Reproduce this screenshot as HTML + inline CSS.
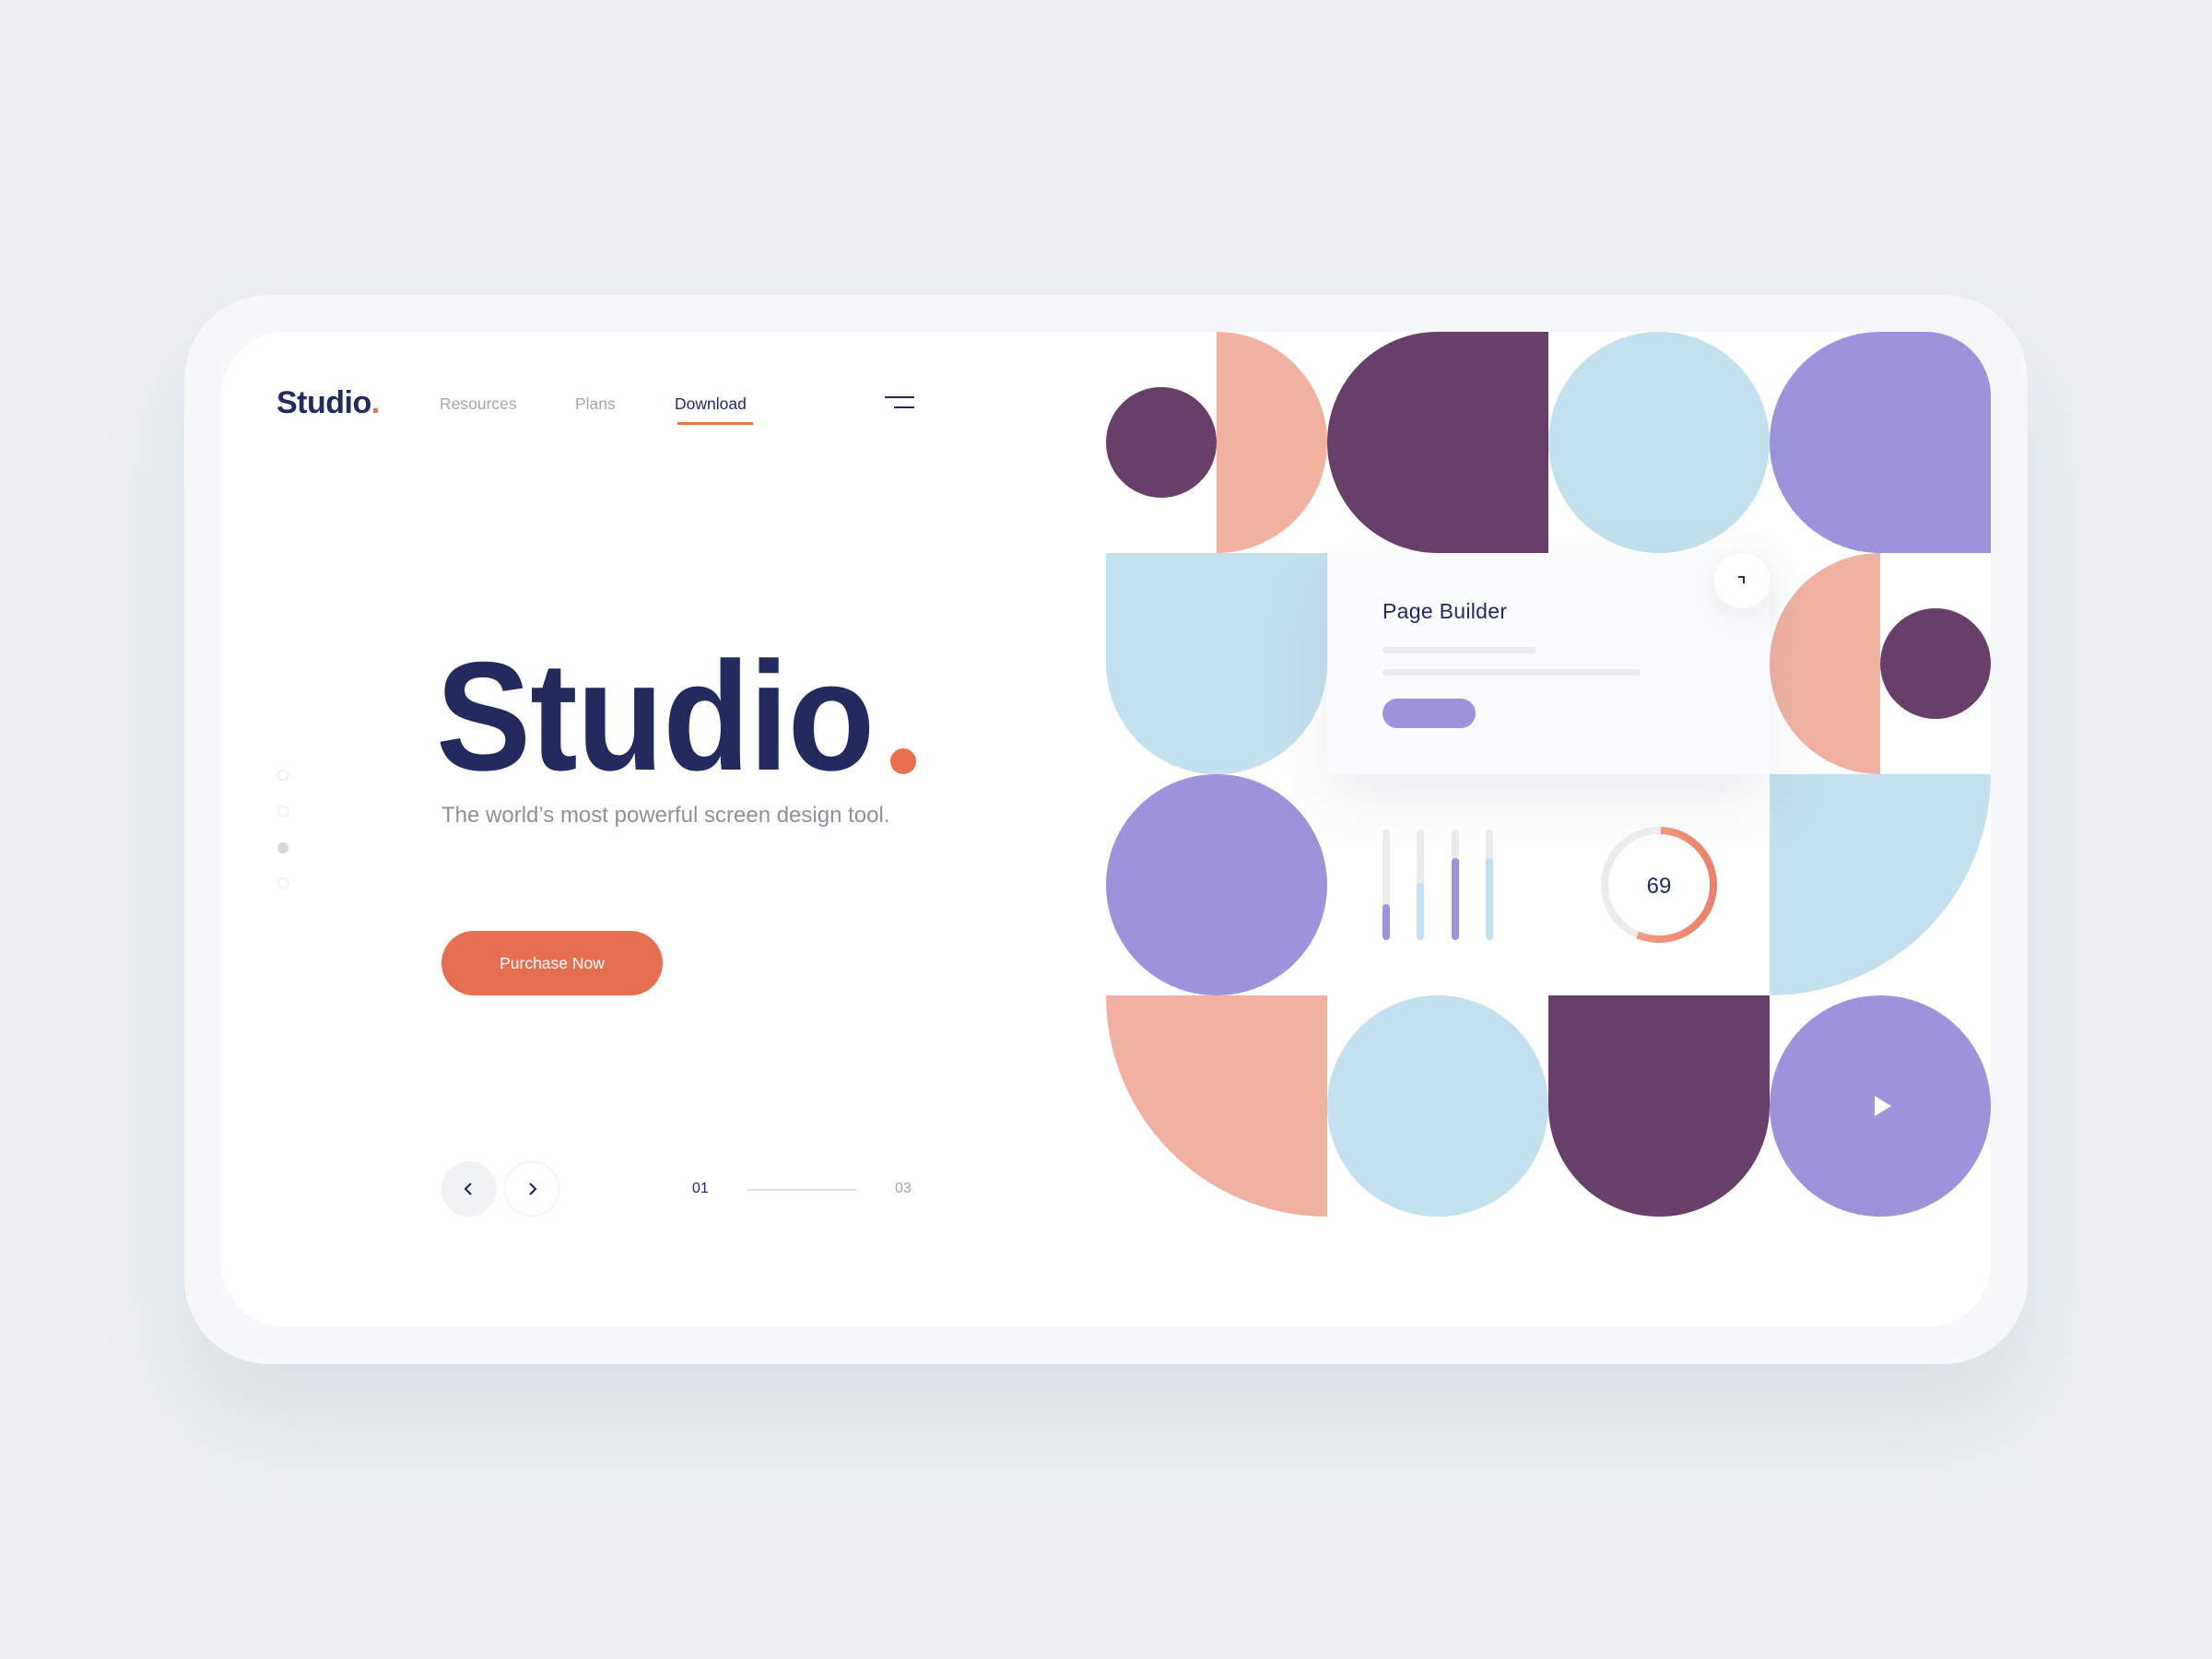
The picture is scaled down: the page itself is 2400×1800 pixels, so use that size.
<!DOCTYPE html>
<html><head><meta charset="utf-8"><style>
*{margin:0;padding:0;box-sizing:border-box}
body{width:2400px;height:1800px;background:#ebeff2;position:relative;overflow:hidden;font-family:"Liberation Sans",sans-serif}
.abs{position:absolute}
.frame{left:200px;top:320px;width:2000px;height:1160px;background:#f6f7f9;border-radius:92px;box-shadow:0 60px 90px rgba(150,160,175,0.18)}
.screen{left:240px;top:360px;width:1920px;height:1080px;background:#fff;border-radius:70px;overflow:hidden}
.c{position:absolute;width:240px;height:240px}
.dp{background:#673f69}.pe{background:#f0b1a1}.lb{background:#c3e0ee}.lv{background:#9d93db}
.nav{top:68px;font-size:17.5px;color:#a3a6b1}
</style></head><body>
<div class="abs frame"></div>
<div class="abs screen">
  <div class="abs" style="left:60px;top:58px;font-size:34px;font-weight:bold;color:#232a5e;letter-spacing:-0.5px">Studio<span style="color:#e8704f">.</span></div>
  <div class="abs nav" style="left:237px">Resources</div>
  <div class="abs nav" style="left:384px">Plans</div>
  <div class="abs nav" style="left:492px;color:#232a5e">Download</div>
  <div class="abs" style="left:495px;top:98px;width:82px;height:3px;background:#e8704f"></div>
  <div class="abs" style="left:720px;top:70px;width:32px;height:2px;background:#232a5e"></div>
  <div class="abs" style="left:730px;top:81px;width:22px;height:2px;background:#232a5e"></div>

  <div class="abs" style="left:233px;top:317px;font-size:168px;font-weight:bold;color:#232a5e;line-height:200px;transform:scaleX(0.92);transform-origin:left top;white-space:nowrap;letter-spacing:-1px">Studio</div>
  <div class="abs" style="left:726px;top:452px;width:28px;height:28px;border-radius:50%;background:#e8704f"></div>
  <div class="abs" style="left:239px;top:511px;font-size:24px;color:#8d909c;white-space:nowrap">The world’s most powerful screen design tool.</div>

  <div class="abs" style="left:61px;top:475px;width:12px;height:12px;border-radius:50%;border:1.5px solid #e6e8ec"></div>
  <div class="abs" style="left:61px;top:514px;width:12px;height:12px;border-radius:50%;border:1.5px solid #e6e8ec"></div>
  <div class="abs" style="left:61px;top:554px;width:12px;height:12px;border-radius:50%;background:#d6d8dd"></div>
  <div class="abs" style="left:61px;top:592px;width:12px;height:12px;border-radius:50%;border:1.5px solid #e6e8ec"></div>

  <div class="abs" style="left:239px;top:650px;width:240px;height:70px;border-radius:35px;background:#e66f51;color:#fff;font-size:17.5px;text-align:center;line-height:70px">Purchase Now</div>

  <div class="abs" style="left:239px;top:900px;width:60px;height:60px;border-radius:50%;background:#f1f2f4"></div>
  <svg class="abs" style="left:259px;top:920px" width="20" height="20"><path d="M12 4 L6 10 L12 16" fill="none" stroke="#232a5e" stroke-width="2.2"/></svg>
  <div class="abs" style="left:307px;top:900px;width:60px;height:60px;border-radius:50%;border:1.5px solid #eceef1;background:#fff"></div>
  <svg class="abs" style="left:327px;top:920px" width="20" height="20"><path d="M8 4 L14 10 L8 16" fill="none" stroke="#232a5e" stroke-width="2.2"/></svg>
  <div class="abs" style="left:511px;top:921px;font-size:16px;color:#232a5e">01</div>
  <div class="abs" style="left:570px;top:930px;width:120px;height:2px;background:#e3e5e9"></div>
  <div class="abs" style="left:731px;top:921px;font-size:16px;color:#a3a6b1">03</div>

  <div class="abs" style="left:960px;top:0;width:960px;height:960px">
    <div class="c" style="left:0;top:0"><div class="abs dp" style="left:0;top:60px;width:120px;height:120px;border-radius:50%"></div><div class="abs pe" style="left:120px;top:0;width:120px;height:240px;border-radius:0 120px 120px 0"></div></div>
    <div class="c dp" style="left:240px;top:0;border-radius:120px 0 0 120px"></div>
    <div class="c lb" style="left:480px;top:0;border-radius:50%"></div>
    <div class="c lv" style="left:720px;top:0;border-radius:120px 0 0 120px"></div>

    <div class="c lb" style="left:0;top:240px;border-radius:0 0 120px 120px"></div>
    <div class="c" style="left:720px;top:240px"><div class="abs pe" style="left:0;top:0;width:120px;height:240px;border-radius:120px 0 0 120px"></div><div class="abs dp" style="left:120px;top:60px;width:120px;height:120px;border-radius:50%"></div></div>

    <div class="c lv" style="left:0;top:480px;border-radius:50%"></div>
    <div class="c lb" style="left:720px;top:480px;border-radius:0 0 240px 0"></div>

    <div class="c pe" style="left:0;top:720px;border-radius:0 0 0 240px"></div>
    <div class="c lb" style="left:240px;top:720px;border-radius:50%"></div>
    <div class="c dp" style="left:480px;top:720px;border-radius:0 0 120px 120px"></div>
    <div class="c lv" style="left:720px;top:720px;border-radius:50%"></div>
    <svg class="abs" style="left:834px;top:829px" width="20" height="24"><path d="M0 0 L18 11 L0 22 Z" fill="#fff"/></svg>

    <div class="abs" style="left:240px;top:240px;width:480px;height:240px;background:#fafbfc;box-shadow:0 30px 60px rgba(120,130,145,0.14)"></div>
    <div class="abs" style="left:300px;top:290px;font-size:23px;color:#232a5e;letter-spacing:0.3px">Page Builder</div>
    <div class="abs" style="left:300px;top:342px;width:167px;height:7px;border-radius:4px;background:#ebebeb"></div>
    <div class="abs" style="left:300px;top:366px;width:280px;height:7px;border-radius:4px;background:#ebebeb"></div>
    <div class="abs" style="left:300px;top:398px;width:101px;height:32px;border-radius:16px;background:#9d93db"></div>
    <div class="abs" style="left:660px;top:240px;width:60px;height:60px;border-radius:50%;background:#fff;box-shadow:0 10px 40px rgba(120,130,145,0.15)"></div>
    <svg class="abs" style="left:682px;top:262px" width="16" height="16"><path d="M4 4 H10 V11" fill="none" stroke="#232a5e" stroke-width="2"/></svg>

    <div class="abs" style="left:300px;top:540px;width:8px;height:120px;border-radius:4px;background:#ebebeb"></div>
    <div class="abs" style="left:300px;top:621px;width:8px;height:39px;border-radius:4px;background:#9d93db"></div>
    <div class="abs" style="left:337px;top:540px;width:8px;height:120px;border-radius:4px;background:#ebebeb"></div>
    <div class="abs" style="left:337px;top:598px;width:8px;height:62px;border-radius:4px;background:#c3e0ee"></div>
    <div class="abs" style="left:375px;top:540px;width:8px;height:120px;border-radius:4px;background:#ebebeb"></div>
    <div class="abs" style="left:375px;top:571px;width:8px;height:89px;border-radius:4px;background:#9d93db"></div>
    <div class="abs" style="left:412px;top:540px;width:8px;height:120px;border-radius:4px;background:#ebebeb"></div>
    <div class="abs" style="left:412px;top:571px;width:8px;height:89px;border-radius:4px;background:#c3e0ee"></div>

    <svg class="abs" style="left:530px;top:530px" width="140" height="140">
      <defs><linearGradient id="g" x1="0" y1="0" x2="0" y2="1"><stop offset="0" stop-color="#f8a78b"/><stop offset="1" stop-color="#e9826a"/></linearGradient></defs>
      <circle cx="70" cy="70" r="59" fill="none" stroke="#ebebeb" stroke-width="8"/>
      <circle cx="70" cy="70" r="59" fill="none" stroke="url(#g)" stroke-width="8" stroke-dasharray="207 400" transform="rotate(-88 70 70)"/>
      <text x="70" y="79" text-anchor="middle" font-family="Liberation Sans, sans-serif" font-size="24" fill="#232a5e">69</text>
    </svg>
  </div>
</div>
</body></html>
